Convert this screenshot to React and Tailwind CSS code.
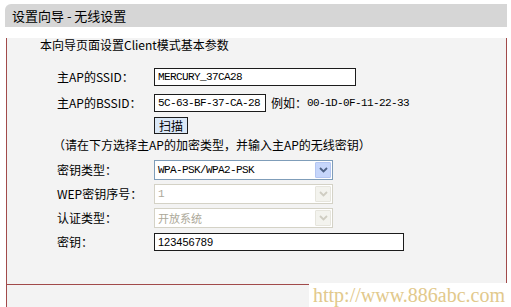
const cjk = { fontFamily: '"Noto Sans CJK SC", "Liberation Sans", sans-serif' };

function Label({ children }) {
  return <div className="w-[97px] shrink-0 text-[12px] leading-[14px] text-black">{children}</div>;
}

function TextBox({ value, width, mono = true }) {
  return (
    <div
      className={`h-[18px] ${width} border border-[#1c1c1c] bg-white pl-[3px] flex items-center text-[11px] text-black`}
      style={mono ? { fontFamily: '"Liberation Mono", monospace', letterSpacing: '-0.6px' } : { fontFamily: '"Liberation Sans", sans-serif' }}
    >
      {value}
    </div>
  );
}

function Chevron({ color }) {
  return (
    <svg width="9" height="6" viewBox="0 0 9 6">
      <path d="M1 1 L4.5 4.5 L8 1" fill="none" stroke={color} strokeWidth="1.8" />
    </svg>
  );
}

function SelectBox({ value, disabled = false }) {
  return (
    <div
      className={`h-[20px] w-[179px] flex items-center justify-between border bg-white pl-[3px] pr-[1px] ${
        disabled ? 'border-[#d4d2c6] bg-[#f9f9f6]' : 'border-[#7f9db9]'
      }`}
    >
      <span
        className={`text-[11px] ${disabled ? 'text-[#aca899]' : 'text-black'}`}
        style={disabled && value !== '1' ? cjk : { fontFamily: '"Liberation Mono", monospace', letterSpacing: '-0.6px' }}
      >
        {value}
      </span>
      <div
        className={`h-[16px] w-[16px] flex items-center justify-center rounded-[1px] border ${
          disabled ? 'border-[#e6e5dd] bg-[#f3f3ee]' : 'border-[#b4c6f2] bg-[#c6d6fb]'
        }`}
      >
        <Chevron color={disabled ? '#cfcdc2' : '#4d6185'} />
      </div>
    </div>
  );
}

function Btn({ children, width }) {
  return (
    <div className={`h-[17px] ${width} border border-[#1c1c1c] bg-[#dbe8f7] flex items-center justify-center text-[12px] text-black`}>
      {children}
    </div>
  );
}

export default function App() {
  return (
    <div className="relative w-[511px] h-[307px] bg-white overflow-hidden" style={cjk}>
      <div className="ml-[5px] mt-[4px] w-[502px]">
        <div className="h-[23px] bg-[#d6d6d6] rounded-tl-[6px] pl-[7px] flex items-center text-[13px] text-black">
          设置向导 - 无线设置
        </div>
        <div className="border-l border-r border-b border-[#a14a4a] bg-[#f3f3f3] ml-[1px]">
          <div className="h-[247px] border-b border-[#a14a4a] pl-[50px]">
            <div className="mt-[11px] h-[14px] pl-[-17px] text-[12px] leading-[14px] -ml-[17px]">
              本向导页面设置Client模式基本参数
            </div>
            <div className="mt-[16px] flex items-center">
              <Label>主AP的SSID：</Label>
              <TextBox value="MERCURY_37CA28" width="w-[202px]" />
            </div>
            <div className="mt-[8px] flex items-center">
              <Label>主AP的BSSID：</Label>
              <TextBox value="5C-63-BF-37-CA-28" width="w-[112px]" />
              <span className="ml-[5px] text-[12px]">例如：</span>
              <span className="text-[11px]" style={{ fontFamily: '"Liberation Mono", monospace', letterSpacing: '-0.6px' }}>
                00-1D-0F-11-22-33
              </span>
            </div>
            <div className="mt-[5px] flex">
              <div className="w-[97px]" />
              <Btn width="w-[34px]">扫描</Btn>
            </div>
            <div className="mt-[4px] h-[14px] text-[12px] leading-[14px] -ml-[4px]">
              （请在下方选择主AP的加密类型，并输入主AP的无线密钥）
            </div>
            <div className="mt-[8px] flex items-center">
              <Label>密钥类型：</Label>
              <SelectBox value="WPA-PSK/WPA2-PSK" />
            </div>
            <div className="mt-[4px] flex items-center">
              <Label>WEP密钥序号：</Label>
              <SelectBox value="1" disabled />
            </div>
            <div className="mt-[4px] flex items-center">
              <Label>认证类型：</Label>
              <SelectBox value="开放系统" disabled />
            </div>
            <div className="mt-[5px] flex items-center">
              <Label>密钥：</Label>
              <TextBox value="123456789" width="w-[250px]" mono={false} />
            </div>
          </div>
          <div className="h-[26px] flex justify-end gap-[13px] pt-[4px] pr-[6px]">
            <Btn width="w-[51px]">上一步</Btn>
            <Btn width="w-[51px]">下一步</Btn>
          </div>
        </div>
      </div>
      <div className="absolute left-[309px] top-[283px] w-[202px] h-[24px] bg-white flex items-center pl-[4px]">
        <span className="text-[20px] leading-none text-[#e2c98c]" style={{ fontFamily: '"Liberation Serif", serif' }}>
          http://www.886abc.com
        </span>
      </div>
    </div>
  );
}
